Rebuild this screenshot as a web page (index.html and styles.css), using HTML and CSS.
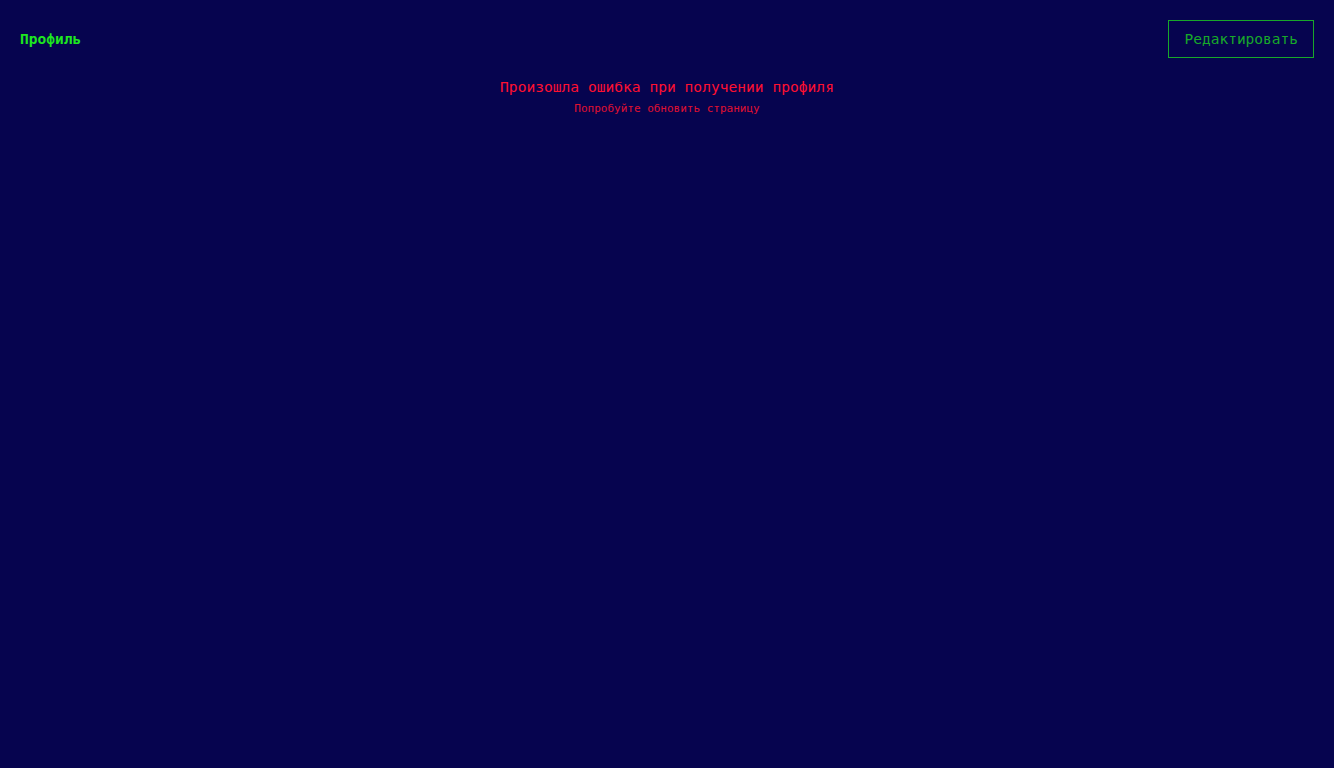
FILE: index.html
```html
<!DOCTYPE html>
<html lang="ru">
<head>
<meta charset="utf-8">
<title>Профиль</title>
<link rel="stylesheet" href="styles.css">
</head>
<body>
<div class="page">
  <header class="header">
    <h1 class="title">Профиль</h1>
    <button class="edit-btn">Редактировать</button>
  </header>
  <section class="error">
    <p class="error-title">Произошла ошибка при получении профиля</p>
    <p class="error-hint">Попробуйте обновить страницу</p>
  </section>
</div>
</body>
</html>
```
FILE: styles.css
```css
html, body {
  margin: 0;
  padding: 0;
  background: #06044f;
  height: 100%;
}
body {
  font-family: "DejaVu Sans Mono", monospace;
}
.page {
  padding: 20px;
}
.header {
  display: flex;
  justify-content: space-between;
  align-items: center;
  height: 38px;
}
.title {
  margin: 0;
  font-size: 14.5px;
  font-weight: bold;
  color: #1ee81e;
}
.edit-btn {
  font-family: "DejaVu Sans Mono", monospace;
  font-size: 14.5px;
  color: #18a82a;
  background: transparent;
  border: 1px solid #18a82a;
  height: 38px;
  padding: 0 15px 0 16px;
  cursor: pointer;
}
.error {
  display: flex;
  flex-direction: column;
  align-items: center;
  margin-top: 20px;
}
.error-title {
  margin: 0;
  font-size: 14.6px;
  color: #ff1030;
}
.error-hint {
  margin: 7px 0 0;
  font-size: 11px;
  color: #e01030;
}
```
